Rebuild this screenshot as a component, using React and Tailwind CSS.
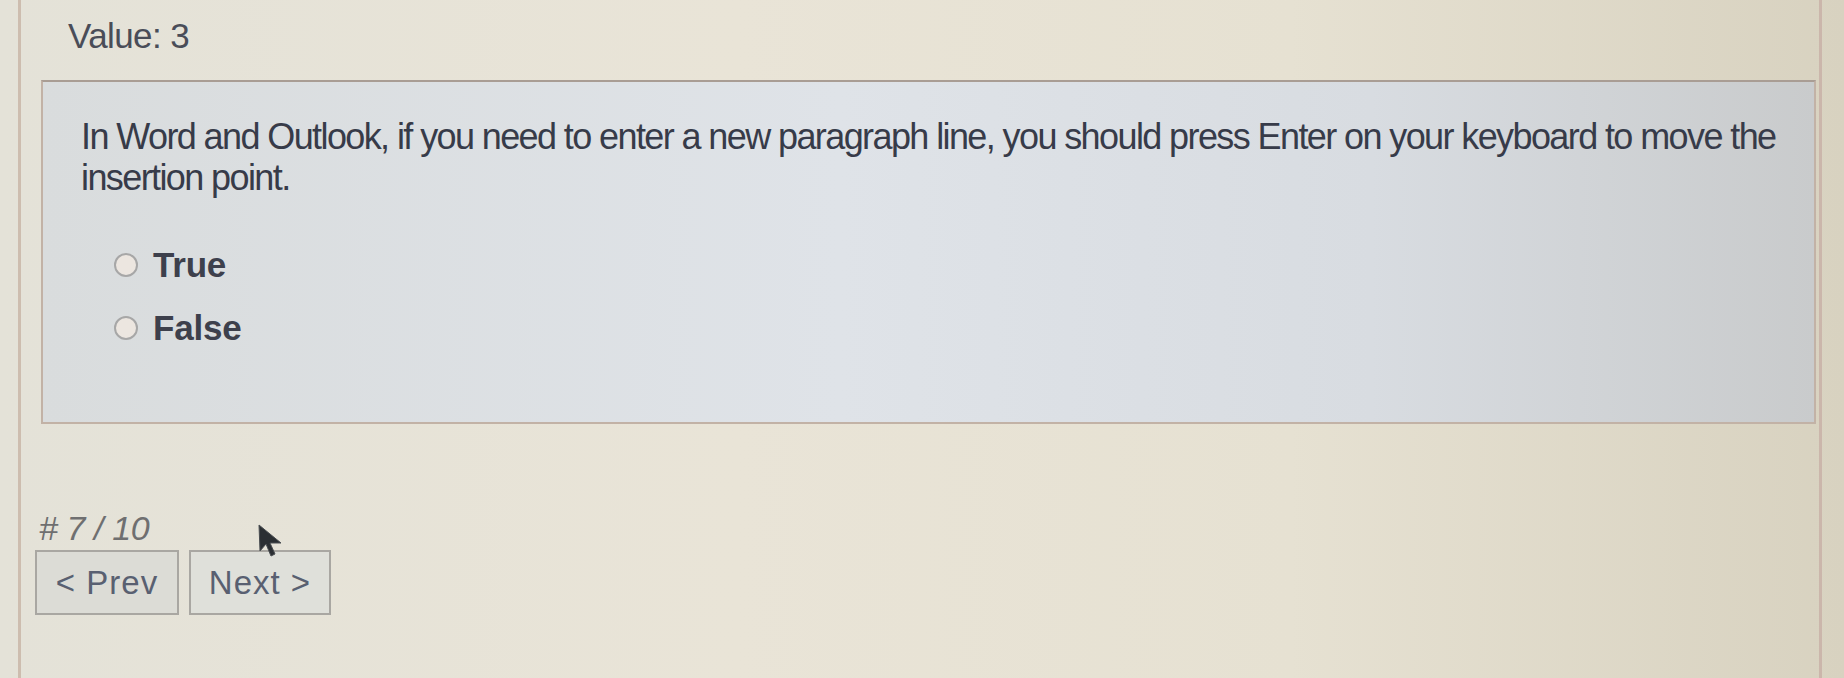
import { useState } from 'react';

// Quiz question card: value, statement, true/false options and pager
const options = ['True', 'False'];

export default function App() {
  const [choice, setChoice] = useState(null);

  return (
    <div className="relative h-[678px] w-[1844px] overflow-hidden bg-[linear-gradient(90deg,#e4e2d8_0%,#e9e4d7_40%,#e6e1d2_70%,#d8d2c0_100%)] font-['Liberation_Sans',Arial,sans-serif] text-[#3d4150]">
      <div className="flex h-full">
        {/* Left frame line */}
        <div className="ml-[18px] w-[3px] shrink-0 bg-[#cdbdaf]" />

        <div className="flex w-[1796px] flex-col">
          <div className="pl-[47px] pt-[16px] text-[35px] leading-[40px] tracking-[-0.6px] text-[#4a4d58]">Value: 3</div>

          {/* Question box */}
          <div className="ml-[20px] mt-[24px] h-[344px] w-[1775px] border-2 border-[#c2b2a6] border-t-[#a99d94] bg-[linear-gradient(90deg,#d9dcdd_0%,#dfe3e8_45%,#d8dce1_75%,#c9cbcc_100%)] pl-[38px] pr-[14px] pt-[34px]">
            <p className="text-[36px] leading-[41px] tracking-[-1.6px] text-[#373b49]">
              In Word and Outlook, if you need to enter a new paragraph line, you should press Enter on your keyboard to move the insertion point.
            </p>

            <div className="mt-[54px] flex flex-col gap-[37px] pl-[33px]">
              {options.map((opt) => (
                <label key={opt} className="flex items-center gap-[15px]" onClick={() => setChoice(opt)}>
                  <span className="flex h-[24px] w-[24px] items-center justify-center rounded-full border-2 border-[#a7a7a7] bg-[#ece6e0]">
                    {choice === opt && <span className="h-[10px] w-[10px] rounded-full bg-[#3a3e4c]" />}
                  </span>
                  <span className="text-[35px] font-bold leading-[26px] tracking-[-0.2px] text-[#3d404c]">{opt}</span>
                </label>
              ))}
            </div>
          </div>

          {/* Pager */}
          <div className="mt-[86px] pl-[18px] text-[34px] italic leading-[36px] tracking-[-0.4px] text-[#6f6f70]"># 7 / 10</div>
          <div className="ml-[14px] mt-[4px] flex gap-[10px]">
            <button className="h-[65px] w-[144px] border-2 border-[#a9a7a2] bg-[#dcdcd6] text-[33px] tracking-[1px] text-[#596071]">&lt; Prev</button>
            <button className="h-[65px] w-[142px] border-2 border-[#a9a7a2] bg-[#dfe0da] text-[33px] tracking-[1px] text-[#596071]">Next &gt;</button>
          </div>
        </div>

        {/* Right frame line */}
        <div className="ml-[2px] w-[3px] shrink-0 bg-[#cbb6ab]" />
      </div>

      {/* Mouse pointer */}
      <svg className="absolute left-[257px] top-[523px]" width="32" height="36" viewBox="0 0 32 36">
        <path d="M2 2 L3 28 L9 21 L14 33 L18 31 L13 20 L24 20 Z" fill="#2b2f33" stroke="#4a4e52" strokeWidth="1" />
      </svg>
    </div>
  );
}
